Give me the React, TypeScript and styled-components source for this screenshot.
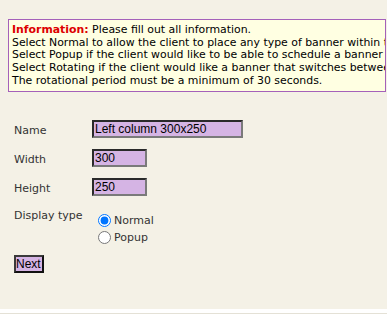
import React from 'react';
import styled, { createGlobalStyle } from 'styled-components';

const GlobalStyle = createGlobalStyle`
    html, body {
        margin: 0;
        padding: 0;
        background: #ffffff;
    }
`;

const Page = styled.div`
    background-color: #f4f1e6;
    height: 309px;
    padding-top: 19px;
    box-sizing: border-box;
    overflow: hidden;
    font-family: 'DejaVu Sans', Verdana, sans-serif;
    font-size: 11px;
    color: #222;
`;

const InfoBox = styled.div`
    margin-left: 8px;
    width: 378px;
    box-sizing: border-box;
    border: 1px solid #a460ba;
    background-color: #ffffe2;
    padding: 4px 3px 3px;
    font-size: 10.9px;
    line-height: 12.7px;
    white-space: nowrap;
    overflow: hidden;
    color: #000;
`;

const InfoTitle = styled.span`
    color: #dd0000;
    font-weight: bold;
`;

const Form = styled.form`
    display: grid;
    grid-template-columns: 78px auto;
    justify-content: start;
    align-items: start;
    row-gap: 11px;
    margin: 28px 0 0 14px;
`;

const Label = styled.label<{ $top?: boolean }>`
    display: block;
    box-sizing: border-box;
    height: 18px;
    line-height: ${p => (p.$top ? '13px' : '18px')};
    padding-top: 2px;
    color: #333;
`;

const TextInput = styled.input<{ $w: number }>`
    width: ${p => p.$w}px;
    height: 18px;
    box-sizing: border-box;
    margin: 0;
    padding: 0 1px;
    border: 2px solid;
    border-color: #2a2a2a #7a7a7a #7a7a7a #2a2a2a;
    background-color: #d5b4e4;
    font-family: 'Liberation Sans', Arial, sans-serif;
    font-size: 12px;
    color: #000;
    outline: none;
`;

const RadioGroup = styled.div`
    display: flex;
    flex-direction: column;
    margin-top: 5px;
`;

const RadioOption = styled.label`
    display: flex;
    align-items: center;
    height: 17px;
    color: #333;
`;

const Radio = styled.input`
    width: 13px;
    height: 13px;
    margin: 0 3px 0 6px;
`;

const NextButton = styled.button`
    grid-column: 1 / span 2;
    justify-self: start;
    height: 18px;
    margin: -2px 0 0;
    padding: 0 1px 0 0;
    border: 2px solid;
    border-color: #3a3a3a #111 #111 #3a3a3a;
    background-color: #d5b4e4;
    font-family: 'Liberation Sans', Arial, sans-serif;
    font-size: 12px;
    line-height: 14px;
    color: #000;
`;

const Footer = styled.div`
    margin-top: 4px;
    height: 8px;
    border-top: 1px solid #e4e1d6;
`;

const App = () => (
    <>
        <GlobalStyle />
        <Page>
            <InfoBox>
                <InfoTitle>Information:</InfoTitle> Please fill out all information.
                <br />
                Select Normal to allow the client to place any type of banner within the column.
                <br />
                Select Popup if the client would like to be able to schedule a banner to pop up.
                <br />
                Select Rotating if the client would like a banner that switches between several banners.
                <br />
                The rotational period must be a minimum of 30 seconds.
            </InfoBox>

            <Form onSubmit={e => e.preventDefault()}>
                <Label>Name</Label>
                <TextInput $w={151} defaultValue="Left column 300x250" />

                <Label>Width</Label>
                <TextInput $w={55} defaultValue="300" />

                <Label>Height</Label>
                <TextInput $w={55} defaultValue="250" />

                <Label $top>Display type</Label>
                <RadioGroup>
                    <RadioOption>
                        <Radio type="radio" name="displayType" defaultChecked />
                        Normal
                    </RadioOption>
                    <RadioOption>
                        <Radio type="radio" name="displayType" />
                        Popup
                    </RadioOption>
                </RadioGroup>

                <NextButton type="submit">Next</NextButton>
            </Form>
        </Page>
        <Footer />
    </>
);

export default App;
